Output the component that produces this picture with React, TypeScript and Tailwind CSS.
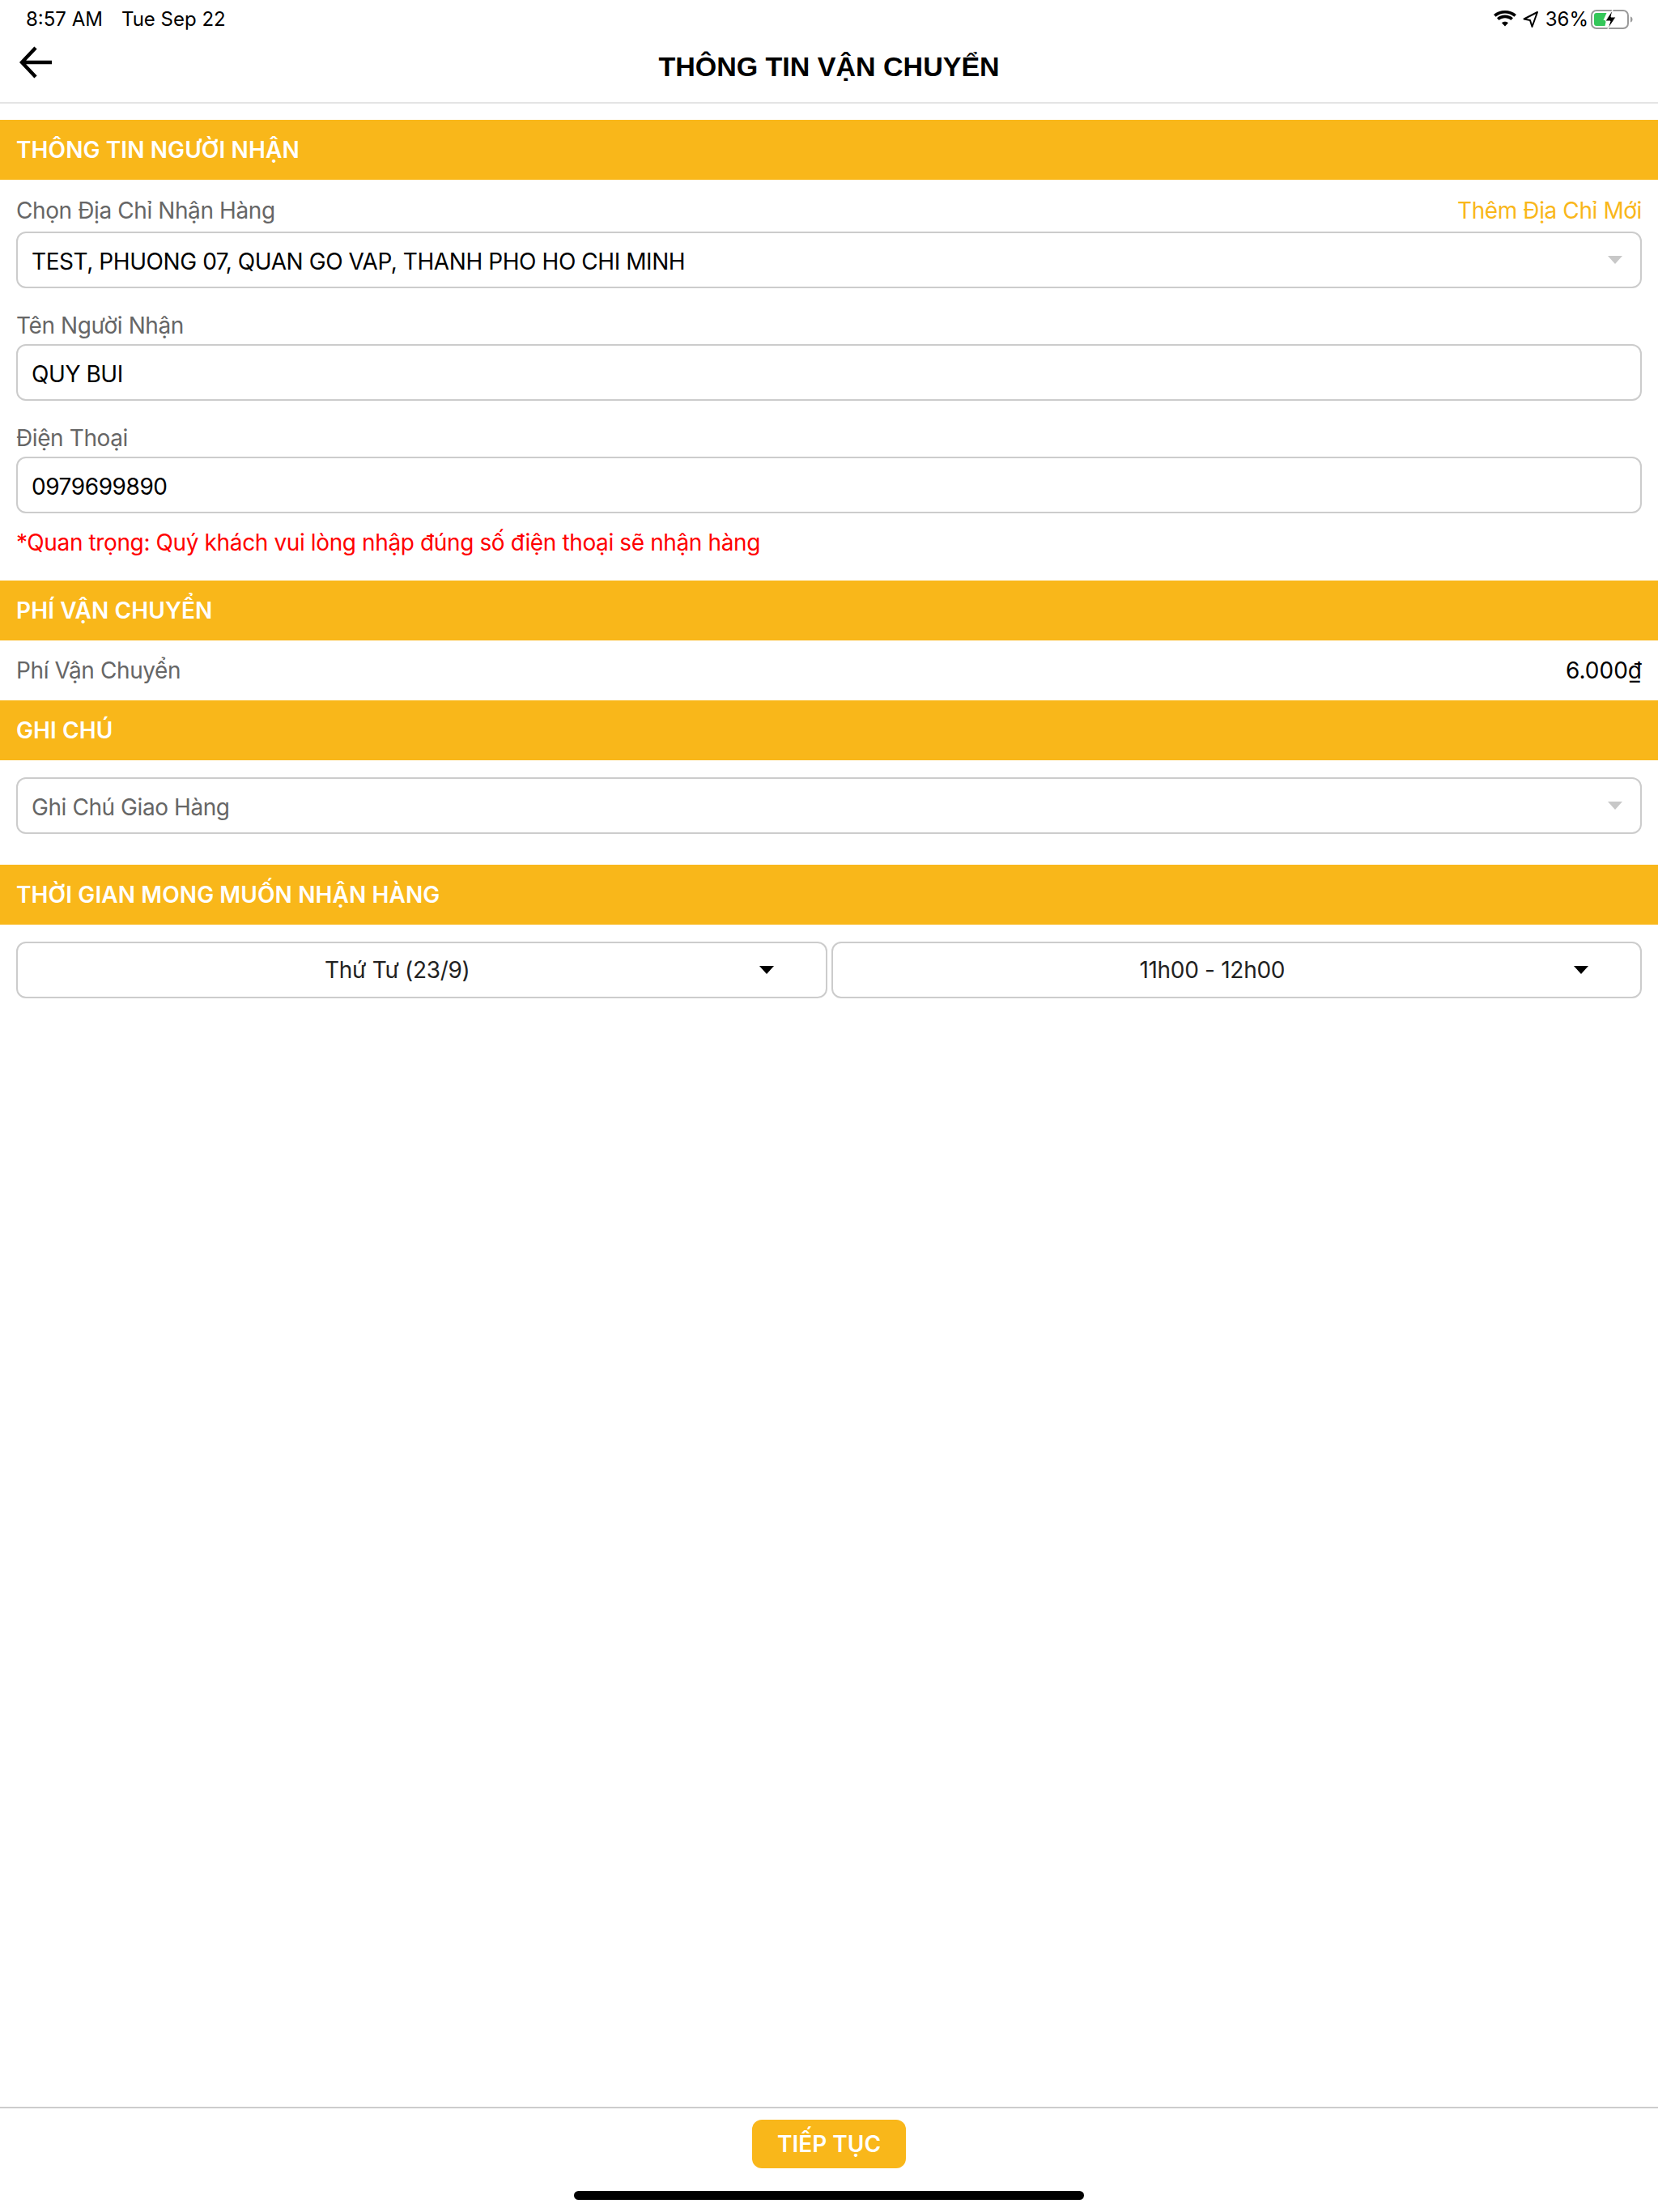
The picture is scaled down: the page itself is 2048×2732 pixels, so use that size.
import React from "react";

const Band = ({ title, className = "" }: { title: string; className?: string }) => (
  <div className={`h-[74px] bg-[#f9b71a] flex items-center px-5 ${className}`}>
    <span className="text-[28px] font-semibold tracking-[0.1px] text-white">{title}</span>
  </div>
);

const Caret = ({ dark = false }: { dark?: boolean }) => (
  <svg width="20" height="12" viewBox="0 0 20 12">
    <path d="M1 1h18L10 11z" fill={dark ? "#000" : "#c8c8c8"} />
  </svg>
);

const Label = ({ children }: { children: React.ReactNode }) => (
  <div className="flex items-end h-[69px] pb-[3px] text-[28px] leading-[40px] tracking-[-0.4px] text-[#666666]">{children}</div>
);

const Field = ({ children, muted = false, caret = false }: { children: React.ReactNode; muted?: boolean; caret?: boolean }) => (
  <div className="h-[70px] border-2 border-[#cccccc] rounded-xl flex items-center justify-between pl-[17px] pr-[21px]">
    <span className={`pt-[3px] text-[28px] tracking-[-0.43px] ${muted ? "text-[#666666]" : "text-black"}`}>{children}</span>
    {caret && <Caret />}
  </div>
);

const Picker = ({ value }: { value: string }) => (
  <div className="relative flex-1 h-[70px] border-2 border-[#cccccc] rounded-xl flex items-center justify-center">
    <span className="text-[28px] tracking-[-0.3px] text-[#222222] pr-[60px]">{value}</span>
    <span className="absolute right-[63px] top-[27px] flex">
      <Caret dark />
    </span>
  </div>
);

export default function App() {
  return (
    <div className="min-h-[2732px] flex flex-col bg-white font-['Inter',sans-serif]">
      {/* status bar */}
      <div className="h-[48px] flex items-center justify-between pl-[32px] pr-[31px] text-[24px] text-black">
        <div className="flex gap-[23px]">
          <span>8:57 AM</span>
          <span>Tue Sep 22</span>
        </div>
        <div className="flex items-center">
          <svg width="28" height="22" viewBox="0 0 28 22">
            <path d="M14 19.5l-4-4.2c2.3-2 5.700-2 8 0zM6.600 12l-2.600-2.700c5.700-5 14.300-5 20 0L21.400 12c-4.300-3.700-10.500-3.700-14.800 0zM2.600 7.800L0 5c7.800-6.600 20.200-6.600 28 0l-2.600 2.800C18.800 2.100 9.200 2.100 2.600 7.800z" fill="#000" />
          </svg>
          <svg className="ml-[8px]" width="20" height="22" viewBox="0 0 20 22">
            <path d="M1.500 10.500L18 2l-6.500 18-2.500-8z" fill="none" stroke="#000" strokeWidth="2" strokeLinejoin="round" />
          </svg>
          <span className="ml-[8px]">36%</span>
          <svg className="ml-[3px]" width="52" height="26" viewBox="0 0 52 26">
            <rect x="1" y="2" width="45" height="22" rx="6" fill="none" stroke="#9a9a9a" strokeWidth="2" />
            <path d="M4 8a3 3 0 0 1 3-3h12.500l-4 9h3.500l-1.500 7H7a3 3 0 0 1-3-3z" fill="#34c759" />
            <path d="M49 9.500c2 .6 2.500 2 2.500 3.500s-.5 2.900-2.500 3.500z" fill="#9a9a9a" />
            <path d="M27 1L18 15h6l-3 10 10-15h-6z" fill="#000" stroke="#fff" strokeWidth="1" />
          </svg>
        </div>
      </div>

      {/* header */}
      <div className="relative h-[80px] border-b-2 border-[#e4e4e4] flex items-center justify-center">
        <svg className="absolute left-[24px] top-[9px]" width="42" height="40" viewBox="0 0 42 40">
          <path d="M40 20H4M20 2L3 20l17 18" fill="none" stroke="#000" strokeWidth="4.500" />
        </svg>
        <span className="text-[34px] font-bold leading-[40px] -mt-[10px] text-black font-['Liberation_Sans',sans-serif]">
          THÔNG TIN VẬN CHUYỂN
        </span>
      </div>

      <Band title="THÔNG TIN NGƯỜI NHẬN" className="mt-[20px]" />
      <div className="px-5">
        <div className="flex justify-between items-end h-[64px] pb-[6px] text-[28px] leading-[40px] tracking-[-0.4px] text-[#666666]">
          <span>Chọn Địa Chỉ Nhận Hàng</span>
          <span className="text-[#f9b71a]">Thêm Địa Chỉ Mới</span>
        </div>
        <Field caret>TEST, PHUONG 07, QUAN GO VAP, THANH PHO HO CHI MINH</Field>
        <Label>Tên Người Nhận</Label>
        <Field>QUY BUI</Field>
        <Label>Điện Thoại</Label>
        <Field>0979699890</Field>
        <div className="flex items-center h-[70px] pt-[1px] text-[28px] tracking-[-0.38px] text-[#ff0000]">
          *Quan trọng: Quý khách vui lòng nhập đúng số điện thoại sẽ nhận hàng
        </div>
      </div>

      <Band title="PHÍ VẬN CHUYỂN" className="mt-[13px]" />
      <div className="h-[74px] px-5 flex items-center justify-between text-[28px]">
        <span className="text-[#666666] tracking-[-0.4px]">Phí Vận Chuyển</span>
        <span className="text-black">6.000₫</span>
      </div>

      <Band title="GHI CHÚ" />
      <div className="px-5 pt-[21px]">
        <Field muted caret>Ghi Chú Giao Hàng</Field>
      </div>

      <Band title="THỜI GIAN MONG MUỐN NHẬN HÀNG" className="mt-[38px]" />
      <div className="px-5 pt-[21px] flex gap-[5px]">
        <Picker value="Thứ Tư (23/9)" />
        <Picker value="11h00 - 12h00" />
      </div>

      <div className="flex-1" />

      {/* footer */}
      <div className="h-[130px] border-t-2 border-[#cccccc] flex flex-col items-center">
        <button className="mt-[14px] w-[190px] h-[60px] rounded-xl bg-[#f9b71a] text-white text-[28px] font-semibold">
          TIẾP TỤC
        </button>
        <div className="mt-[28px] w-[630px] h-[11px] rounded-full bg-black" />
      </div>
    </div>
  );
}
